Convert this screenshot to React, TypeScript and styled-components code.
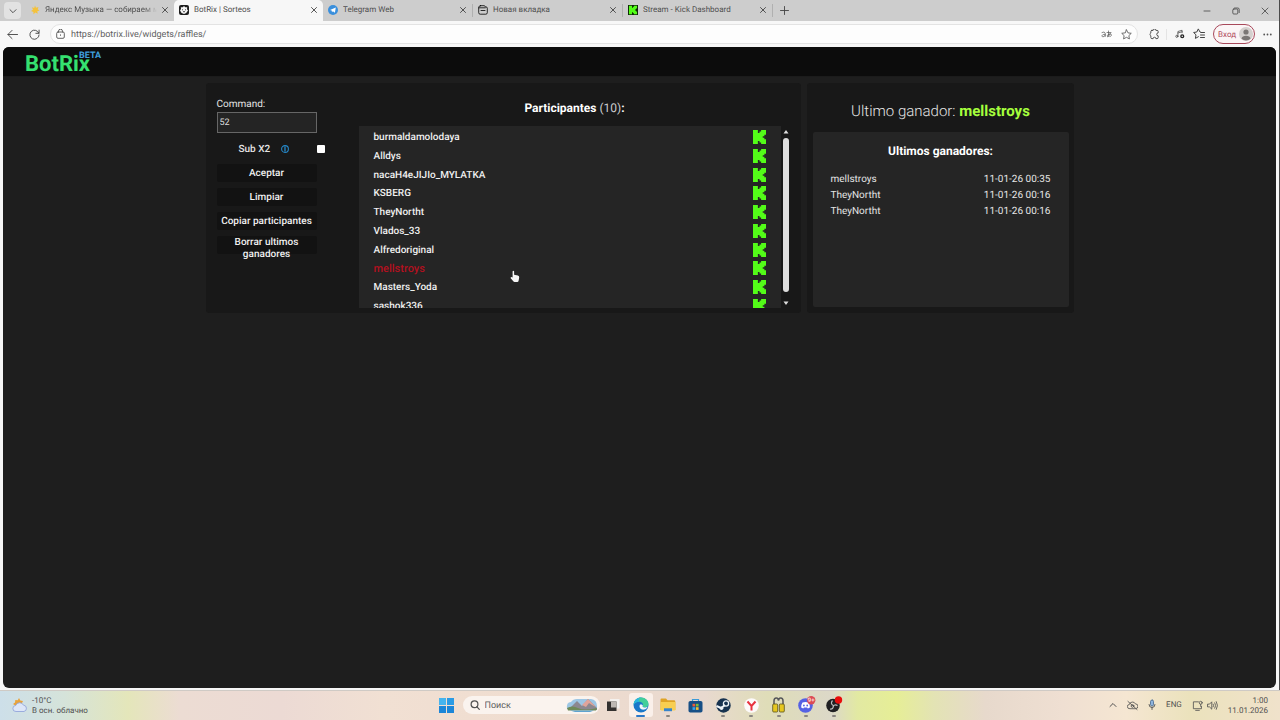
import React from "react";
import styled, { createGlobalStyle, css } from "styled-components";

const GlobalStyle = createGlobalStyle`
  * { box-sizing: border-box; }
  body { margin: 0; background: #f7f7f7; font-family: Roboto, "Liberation Sans", sans-serif; text-rendering: geometricPrecision; }
  button, input { font-family: inherit; text-rendering: inherit; }
  svg { display: block; flex: none; }
`;

const Desktop = styled.div`
  min-height: 100vh;
  display: flex;
  flex-direction: column;
`;

const BrowserWindow = styled.div`
  flex: 1;
  display: flex;
  flex-direction: column;
  background: #f7f7f7;
  border-right: 1px solid #4a4a4a;
`;

/* Tab strip */
const TabStrip = styled.div`
  height: 21px;
  display: flex;
  align-items: center;
  background: #cdcdcd;
`;

const PlainButton = styled.button`
  border: 0;
  padding: 0;
  background: none;
  color: #444;
  display: flex;
  align-items: center;
  justify-content: center;
`;

const TabMenu = styled(PlainButton)`
  width: 17px;
  height: 17px;
  margin: 0 4px;
  border-radius: 4px;
  background: #e2e2e2;
`;

const Tab = styled.div<{ $active?: boolean }>`
  flex: 0 1 149px;
  min-width: 0;
  height: 21px;
  padding: 0 6px 1px 5px;
  display: flex;
  align-items: center;
  gap: 5px;
  border-radius: 5px 5px 0 0;
  background: ${(p) => (p.$active ? "#f7f7f7" : "transparent")};
`;

const TabTitle = styled.span<{ $fade?: boolean }>`
  flex: 1;
  min-width: 0;
  overflow: hidden;
  white-space: nowrap;
  font-size: 8px;
  line-height: 12px;
  color: #505050;
  ${(p) => p.$fade && css`mask-image: linear-gradient(to right, #000 88%, transparent);`}
`;

const Separator = styled.span`
  width: 1px;
  height: 13px;
  background: #b0b0b0;
`;

const NewTab = styled(PlainButton)`
  width: 22px;
  height: 17px;
`;

const WindowControls = styled.div`
  margin-left: auto;
  padding-right: 10px;
  display: flex;
  gap: 21px;
`;

/* Address bar */
const Toolbar = styled.div`
  height: 26px;
  padding: 0 7px;
  display: flex;
  align-items: center;
  color: #555;
`;

const NavButtons = styled.div`
  width: 43px;
  display: flex;
  gap: 11px;
`;

const AddressBar = styled.form`
  flex: 1;
  height: 20px;
  margin: 0;
  padding: 0 5px;
  display: flex;
  align-items: center;
  gap: 6px;
  background: #fdfdfd;
  border: 1px solid #e3e3e3;
  border-radius: 10px;
`;

const AddressInput = styled.input`
  flex: 1;
  min-width: 0;
  border: 0;
  padding: 1px 0 0;
  background: none;
  outline: 0;
  font-size: 9px;
  line-height: 14px;
  color: #606060;
`;

const AddressActions = styled.div`
  display: flex;
  align-items: center;
  gap: 9px;
`;

const ToolbarActions = styled.div`
  display: flex;
  align-items: center;
  gap: 8px;
  padding-left: 11px;
`;

const ExtensionButton = styled(PlainButton)`
  width: 18px;
  justify-content: flex-start;
  border-right: 1px solid #e4e4e4;
`;

const LoginButton = styled.button`
  height: 20px;
  padding: 0 1px 0 4px;
  display: flex;
  align-items: center;
  gap: 3px;
  border: 1px solid #a8485a;
  border-radius: 10px;
  background: #fbf5f6;
  color: #b04a5c;
  font-size: 8px;
`;

/* Web page */
const Page = styled.div`
  flex: 1;
  margin: 0 3px 2px;
  border-radius: 6px;
  overflow: hidden;
  background: #1e1e1e;
  color: #e4e4e4;
`;

const Header = styled.header`
  height: 30px;
  padding: 0 22px;
  display: flex;
  align-items: flex-start;
  background: #0c0c0c;
  border-bottom: 1px solid #1b1b1b;
`;

const Brand = styled.a`
  position: relative;
  color: #35e070;
  text-decoration: none;
  font-size: 22px;
  line-height: 36px;
  font-weight: 700;
`;

const Beta = styled.span`
  position: absolute;
  left: 54px;
  top: 4px;
  font-size: 9px;
  line-height: 10px;
  font-weight: 700;
  color: #3f9fdc;
`;

const Main = styled.main`
  max-width: 868px;
  margin: 6px auto 0;
  display: grid;
  grid-template-columns: 595fr 267fr;
  gap: 6px;
`;

const Panel = styled.section`
  background: #181818;
  border-radius: 3px;
`;

const RafflePanel = styled(Panel)`
  padding: 15px 10px 5px 11px;
  display: grid;
  grid-template-columns: 108px 1fr;
  column-gap: 34px;
`;

const WinnerPanel = styled(Panel)`
  padding: 18px 5px 6px 6px;
  display: flex;
  flex-direction: column;
`;

const RaffleForm = styled.form`
  display: flex;
  flex-direction: column;
  align-items: flex-start;
`;

const FieldLabel = styled.label`
  font-size: 10px;
  line-height: 14px;
`;

const CommandInput = styled.input`
  width: 100px;
  height: 21px;
  padding: 1px 2px 0;
  border: 1px solid #666;
  background: #242424;
  color: #ddd;
  font-size: 9px;
  outline: 0;
`;

const SubRow = styled.div`
  width: 108px;
  height: 14px;
  margin: 9px 0 8px;
  padding-left: 22px;
  display: flex;
  align-items: center;
  gap: 11px;
  font-size: 10px;
  font-weight: 500;
`;

const Check = styled.input`
  appearance: none;
  width: 8px;
  height: 8px;
  margin: 0 0 0 auto;
  border-radius: 1px;
  background: #fff;
`;

const ActionButton = styled.button`
  width: 100px;
  height: 18px;
  margin-bottom: 6px;
  padding: 1px 0 0;
  border: 0;
  border-radius: 2px;
  background: #121212;
  color: #f0f0f0;
  font-size: 10px;
  line-height: 12px;
  font-weight: 500;
`;

const ListTitle = styled.h2`
  margin: 2px 0 10px;
  text-align: center;
  font-size: 12px;
  line-height: 16px;
  font-weight: 700;
  color: #fff;
`;

const Count = styled.span`
  font-weight: 400;
  color: #ccc;
`;

const ListFrame = styled.div`
  position: relative;
  height: 182px;
  display: flex;
`;

const ListViewport = styled.div`
  flex: 1;
  overflow: hidden;
  background: #252525;
`;

const ParticipantList = styled.ul`
  height: 187px;
  margin: 2px 0 0;
  padding: 0 15px;
  list-style: none;
  display: grid;
  grid-auto-rows: 1fr;
`;

const Participant = styled.li<{ $winner?: boolean }>`
  display: flex;
  align-items: center;
  justify-content: space-between;
  font-size: ${(p) => (p.$winner ? "11px" : "10px")};
  font-weight: 500;
  color: ${(p) => (p.$winner ? "#b3101f" : "#f0f0f0")};
`;

const ParticipantName = styled.span`
  padding-top: 1px;
`;

const Scrollbar = styled.div`
  width: 10px;
  padding: 4px 2px 3px;
  display: flex;
  flex-direction: column;
  align-items: center;
  gap: 4px;
`;

const Thumb = styled.div`
  flex: 1;
  width: 6px;
  margin-bottom: 5px;
  border-radius: 3px;
  background: #dedede;
`;

const Pointer = styled.svg`
  position: absolute;
  left: 151px;
  top: 144px;
`;

const LastWinner = styled.p`
  margin: 0 0 11px;
  text-align: center;
  font-size: 15px;
  line-height: 20px;
  font-weight: 300;
`;

const WinnerName = styled.strong`
  font-weight: 700;
  color: #a6ff3d;
`;

const History = styled.div`
  flex: 1;
  padding: 11px 18px;
  background: #252525;
  border-radius: 2px;
`;

const HistoryTitle = styled(ListTitle)`
  margin: 0 0 13px;
`;

const HistoryTable = styled.table`
  width: 100%;
  border-collapse: collapse;
  font-size: 10px;
  line-height: 16px;
  td { padding: 0; }
  td:last-child { text-align: right; }
`;

/* Taskbar */
const Taskbar = styled.footer`
  height: 30px;
  padding: 0 12px 1px;
  display: grid;
  grid-template-columns: 1fr auto 1fr;
  align-items: center;
  border-top: 1px solid #cfcac5;
  color: #505050;
  font-size: 8px;
  line-height: 10px;
  background: linear-gradient(to right, #cddfe9 0%, #d5e3da 5%, #e4e6ba 10%, #ecdcd3 14%, #ecdad4 22%, #f1e0d3 30%, #efdccf 44%, #e8d9cf 55%, #dfddb8 60%, #dcd8c8 65%, #e2e9a2 67%, #e6ee96 70%, #e3e3b4 73%, #e7d9cc 77%, #efdfd2 83%, #f5e6d2 88%, #ebe2bc 93%, #f0e2cb 100%);
`;

const Weather = styled.div`
  display: flex;
  align-items: center;
  gap: 4px;
`;

const Stack = styled.div<{ $right?: boolean }>`
  padding-top: 2px;
  display: flex;
  flex-direction: column;
  text-align: ${(p) => (p.$right ? "right" : "left")};
`;

const Dock = styled.nav`
  padding-left: 6px;
  display: flex;
  align-items: center;
`;

const SearchBox = styled.label`
  width: 137px;
  height: 18px;
  margin-left: 9px;
  padding: 0 2px 0 7px;
  display: flex;
  align-items: center;
  gap: 5px;
  border-radius: 9px;
  background: #faf3ee;
`;

const SearchInput = styled.input`
  flex: 1;
  min-width: 0;
  border: 0;
  padding: 1px 0 0;
  background: none;
  outline: 0;
  font-size: 9px;
  &::placeholder { color: #606060; opacity: 1; }
`;

const Apps = styled.div`
  width: 248px;
  display: grid;
  grid-auto-flow: column;
  grid-auto-columns: 1fr;
  justify-items: center;
`;

const AppButton = styled(PlainButton)<{ $open?: boolean; $active?: boolean }>`
  position: relative;
  width: 24px;
  height: 24px;
  border-radius: 3px;
  background: ${(p) => (p.$active ? "#faf0ea" : "transparent")};
  &::after {
    content: "";
    display: ${(p) => (p.$open || p.$active ? "block" : "none")};
    position: absolute;
    bottom: 0;
    width: ${(p) => (p.$active ? "9px" : "4px")};
    height: 2px;
    border-radius: 1px;
    background: ${(p) => (p.$active ? "#2b78c8" : "#8a8680")};
  }
`;

const Tray = styled.div`
  display: flex;
  align-items: center;
  justify-content: flex-end;
  gap: 10px;
`;

const TrayPair = styled.div`
  display: flex;
  gap: 4px;
`;

type LineProps = { w?: number; h?: number; box?: string; sw?: number; children: React.ReactNode };
const Line = ({ w = 12, h = w, box = "0 0 12 12", sw = 1, children }: LineProps) => (
  <svg width={w} height={h} viewBox={box} fill="none" stroke="currentColor" strokeWidth={sw} strokeLinecap="round" strokeLinejoin="round" aria-hidden="true">
    {children}
  </svg>
);

const Close = () => (
  <PlainButton aria-label="Закрыть">
    <Line w={6} box="0 0 6 6" sw={0.9}><path d="M.5.5l5 5M5.500.5l-5 5" /></Line>
  </PlainButton>
);

const KICK = "M0 0h3v2h1V1h1V0h3v3H7v1H6v1h1v1h1v3H5V8H4V7H3v2H0z";

const Kick = () => (
  <svg width="13" height="14" viewBox="0 0 8 9" preserveAspectRatio="none" fill="#53fc18" role="img" aria-label="Kick">
    <path d={KICK} />
  </svg>
);

const YandexMusicIcon = () => (
  <svg width="10" height="10" viewBox="0 0 10 10"><path d="M5 .5l1 2.300 2.500-.8-.8 2.300L9.500 5.500 7.300 6.300l.4 2.400-2.300-1.200-1.900 1.700L3.400 7 1 6l2-1.200L2 2.200l2.200.9z" fill="#f4c23c" /></svg>
);
const BotrixIcon = () => (
  <svg width="10" height="10" viewBox="0 0 10 10">
    <rect width="10" height="10" rx="2" fill="#1c1c1c" />
    <path d="M5 1l1.200 1.300h2L8 4.200 9 5.600 7.200 8 5 9 2.600 8 1 5.600l1-1.500L1.800 2.300h2z" fill="#f4f4f4" />
    <path d="M3 4.500l1 .6M7 4.500l-1 .6M4 6.700h2" stroke="#1c1c1c" strokeWidth=".8" />
  </svg>
);
const TelegramIcon = () => (
  <svg width="10" height="10" viewBox="0 0 10 10">
    <circle cx="5" cy="5" r="5" fill="#3a8fdc" />
    <path d="M2 4.900L7.800 2.500 6.900 7.700 4.900 6.300l-.9.900-.3-1.700z" fill="#fff" />
  </svg>
);
const PageIcon = () => (
  <Line w={10} box="0 0 10 10" sw={0.8}><path d="M2.500.7h4l.8 1.200h.7a1.300 1.300 0 011.300 1.300v4.500A1.500 1.500 0 017.800 9.200H2.200A1.500 1.500 0 01.7 7.700V2.500A1.800 1.800 0 012.500.7zM.8 2.800h6.500M3 5.500h4" /></Line>
);
const KickTabIcon = () => (
  <svg width="10" height="10" viewBox="0 0 10 10"><rect width="10" height="10" fill="#102c08" /><path d={KICK} transform="translate(1 .8) scale(1 .93)" fill="#53fc18" /></svg>
);

const participants = [
  "burmaldamolodaya", "Alldys", "nacaH4eJIJIo_MYLATKA", "KSBERG", "TheyNortht",
  "Vlados_33", "Alfredoriginal", "mellstroys", "Masters_Yoda", "sashok336",
];
const winners = [
  ["mellstroys", "11-01-26 00:35"],
  ["TheyNortht", "11-01-26 00:16"],
  ["TheyNortht", "11-01-26 00:16"],
];
const tabs = [
  { title: "Яндекс Музыка — собираем музыку", icon: <YandexMusicIcon />, fade: true },
  { title: "BotRix | Sorteos", icon: <BotrixIcon />, active: true },
  { title: "Telegram Web", icon: <TelegramIcon /> },
  { title: "Новая вкладка", icon: <PageIcon />, line: true },
  { title: "Stream - Kick Dashboard", icon: <KickTabIcon />, line: true },
];

const Browser = () => (
  <>
    <TabStrip>
      <TabMenu aria-label="Вкладки"><Line w={8} box="0 0 8 8" sw={0.9}><path d="M1 2.700l3 3 3-3" /></Line></TabMenu>
      {tabs.map((t) => (
        <React.Fragment key={t.title}>
          {t.line && <Separator />}
          <Tab $active={t.active}>
            {t.icon}
            <TabTitle $fade={t.fade}>{t.title}</TabTitle>
            <Close />
          </Tab>
        </React.Fragment>
      ))}
      <Separator />
      <NewTab aria-label="Новая вкладка"><Line w={9} box="0 0 9 9" sw={0.9}><path d="M4.500.5v8M.5 4.500h8" /></Line></NewTab>
      <WindowControls>
        <PlainButton aria-label="Свернуть"><Line w={8} box="0 0 8 8" sw={0.8}><path d="M1 4h6" /></Line></PlainButton>
        <PlainButton aria-label="Развернуть"><Line w={8} box="0 0 8 8" sw={0.8}><rect x=".8" y="2" width="5" height="5" rx="1" /><path d="M2.500 1h3.300A1.400 1.400 0 017.200 2.400v3.200" /></Line></PlainButton>
        <PlainButton aria-label="Закрыть окно"><Line w={8} box="0 0 8 8" sw={0.8}><path d="M1 1l6 6M7 1L1 7" /></Line></PlainButton>
      </WindowControls>
    </TabStrip>
    <Toolbar>
      <NavButtons>
        <PlainButton aria-label="Назад"><Line w={11} box="0 0 12 12"><path d="M11.500 6H1M5.500 1.500L1 6l4.500 4.500" /></Line></PlainButton>
        <PlainButton aria-label="Обновить"><Line w={11} box="0 0 12 12"><path d="M10.700 4.500A5 5 0 1011 6.500M11 1.200v3.500H7.500" /></Line></PlainButton>
      </NavButtons>
      <AddressBar>
        <Line w={9} h={10} box="0 0 9 10" sw={0.9}><rect x=".7" y="3" width="7.600" height="6.300" rx="1.300" /><path d="M2.500 3V2.200a2 2 0 014 0V3M4.500 5.800v.6" /></Line>
        <AddressInput aria-label="Адрес" defaultValue="https://botrix.live/widgets/raffles/" />
        <AddressActions>
          <Line w={11} h={8} box="0 0 11 8" sw={0.7}><path d="M1 2.500q2.800-1.500 3.200.7v3.300M4.200 4.300C.5 4 .2 6.800 2 6.800q1.500 0 2.200-1.500M6 2.500h4M7.500 1v4.500q0 1.500-1 1-1.200-1.200 1.500-2.300c2-.7 2.700.3 2.300 1.400q-.4.900-1.500 1M9.300 3.500Q8.500 6 7 6.700" /></Line>
          <Line w={11} sw={0.9}><path d="M6 .9l1.600 3.300 3.600.5-2.600 2.500.6 3.600L6 9.100l-3.200 1.700.6-3.600L.8 4.700l3.600-.5z" /></Line>
        </AddressActions>
      </AddressBar>
      <ToolbarActions>
        <ExtensionButton aria-label="Расширения"><Line w={11}><path d="M3.200 1.500h1.300a1.500 1.500 0 013 0h1.300a1.200 1.200 0 011.200 1.200v1.500a1.600 1.600 0 100 3.200v1.900a1.200 1.200 0 01-1.200 1.200H7.500a1.500 1.500 0 00-3 0H3.200A1.200 1.200 0 012 9.300V7.400a1.700 1.700 0 010-3V2.700a1.200 1.200 0 011.200-1.200z" /></Line></ExtensionButton>
        <PlainButton aria-label="Музыка">
          <Line w={10} sw={0.9}><path d="M3.500 8.500V3L8.500 1.500v3M3.500 4.800l5-1.500" /><circle cx="2.200" cy="8.800" r="1.300" /><circle cx="8.700" cy="8.700" r="1.700" stroke="#222" strokeWidth="1.600" /></Line>
        </PlainButton>
        <PlainButton aria-label="Избранное"><Line w={12}><path d="M7.500 4.200L7 4 5.300.9 3.800 4l-3.200.5L3 6.800l-.6 3.600 3-1.700M8 4.500h3.500M7.500 7h4M7.500 9.500h4" /></Line></PlainButton>
        <LoginButton>
          Вход
          <svg width="14" height="14" viewBox="0 0 14 14"><circle cx="7" cy="7" r="7" fill="#d4d0ce" /><circle cx="7" cy="5" r="2.600" fill="#7b7775" /><path d="M2.500 11.800c0-4 9-4 9 0a6.500 6.500 0 01-9 0z" fill="#7b7775" /></svg>
        </LoginButton>
        <PlainButton aria-label="Меню"><svg width="9" height="3" viewBox="0 0 9 3" fill="#555"><circle cx="1.200" cy="1.500" r=".9" /><circle cx="4.500" cy="1.500" r=".9" /><circle cx="7.800" cy="1.500" r=".9" /></svg></PlainButton>
      </ToolbarActions>
    </Toolbar>
  </>
);

const Raffle = () => (
  <RafflePanel>
    <RaffleForm onSubmit={(e) => e.preventDefault()}>
      <FieldLabel htmlFor="command">Command:</FieldLabel>
      <CommandInput id="command" defaultValue="52" />
      <SubRow>
        <label htmlFor="subx2">Sub X2</label>
        <svg width="8" height="8" viewBox="0 0 8 8" fill="none" stroke="#2588c9"><circle cx="4" cy="4" r="3.400" strokeWidth="1.100" /><path d="M4 1.500v5" strokeWidth="1.300" /></svg>
        <Check id="subx2" type="checkbox" />
      </SubRow>
      <ActionButton type="submit">Aceptar</ActionButton>
      <ActionButton type="button">Limpiar</ActionButton>
      <ActionButton type="button">Copiar participantes</ActionButton>
      <ActionButton type="button">Borrar ultimos ganadores</ActionButton>
    </RaffleForm>
    <div>
      <ListTitle>Participantes <Count>(10)</Count>:</ListTitle>
      <ListFrame>
        <ListViewport>
          <ParticipantList>
            {participants.map((name) => (
              <Participant key={name} $winner={name === "mellstroys"}>
                <ParticipantName>{name}</ParticipantName>
                <Kick />
              </Participant>
            ))}
          </ParticipantList>
        </ListViewport>
        <Scrollbar>
          <svg width="6" height="4" viewBox="0 0 6 4" fill="#dedede"><path d="M3 0l2.500 3.500h-5z" /></svg>
          <Thumb />
          <svg width="6" height="4" viewBox="0 0 6 4" fill="#dedede"><path d="M3 4L.5.500h5z" /></svg>
        </Scrollbar>
        <Pointer width="10" height="13" viewBox="0 0 10 13" aria-hidden="true">
          <path d="M2.600 1.200q.9-.8 1.500.1v3.500l3.800.8q1.500.4 1.300 1.900l-.6 3.200q-.2 1.300-1.400 1.300H4.500q-.7 0-1.200-.7L.7 8.200Q.2 7.200 1.400 7l1.200.6z" fill="#f6f6f6" />
        </Pointer>
      </ListFrame>
    </div>
  </RafflePanel>
);

const Winners = () => (
  <WinnerPanel>
    <LastWinner>Ultimo ganador: <WinnerName>mellstroys</WinnerName></LastWinner>
    <History>
      <HistoryTitle>Ultimos ganadores:</HistoryTitle>
      <HistoryTable>
        <tbody>
          {winners.map(([name, date], i) => (
            <tr key={i}><td>{name}</td><td>{date}</td></tr>
          ))}
        </tbody>
      </HistoryTable>
    </History>
  </WinnerPanel>
);

const EdgeIcon = () => (
  <svg width="16" height="16" viewBox="0 0 16 16">
    <circle cx="8" cy="8" r="7.500" fill="#1b78c9" />
    <path d="M.6 7.500C1 3 4.500.5 8 .5c4.500 0 7.500 3.200 7.500 6.300 0 2.500-2 3.700-4 3.700-1.500 0-2.300-.7-1.800-1.400C10.800 7 9 4.800 6.300 4.800 3.500 4.800 1.500 6 .6 7.500z" fill="#43cf9a" />
    <path d="M.6 7.500C1 3 4.500.5 8 .5c-2 1-3 2.500-1.700 4.300C3.500 4.800 1.500 6 .6 7.500z" fill="#2bb5e0" />
    <path d="M9.700 9.100c-.5.700.3 1.400 1.800 1.400 1.200 0 2.400-.3 3.200-1.100-.5 1.700-1.800 2.900-3.300 3.200C7.800 13.300 5.500 10.500 7 7.500c1.600-.3 3.300.2 2.700 1.600z" fill="#f3f7fa" />
  </svg>
);

const TaskbarView = () => (
  <Taskbar>
    <Weather>
      <svg width="16" height="16" viewBox="0 0 16 16">
        <path d="M7 1l1.300 2.500L11 4l-1.500 3L4 9 1 7l2-1.500L3.300 3l2.500.3z" fill="#e9a33b" />
        <path d="M4 14.500a3 3 0 01-.3-6 4.200 4.200 0 017.800-.3A3.200 3.200 0 0112 14.500z" fill="#dde6f8" stroke="#93a6da" strokeWidth=".9" />
      </svg>
      <Stack><span>-10°C</span><span>В осн. облачно</span></Stack>
    </Weather>
    <Dock>
      <PlainButton aria-label="Пуск">
        <svg width="15" height="15" viewBox="0 0 15 15" fill="#1c86d8"><path d="M0 0h7v7H0z" fill="#46b4ee" /><path d="M8 0h7v7H8z" fill="#2b9be4" /><path d="M0 8h7v7H0zM8 8h7v7H8z" /></svg>
      </PlainButton>
      <SearchBox>
        <Line w={10} box="0 0 10 10" sw={1.2}><circle cx="4.500" cy="4.200" r="3.400" /><path d="M7 6.800l2.300 2.500" /></Line>
        <SearchInput placeholder="Поиск" aria-label="Поиск" />
        <svg width="32" height="16" viewBox="0 0 32 16">
          <path d="M1 12Q0 5 5 5q2-3 6-3h14q6 1 6 7v4z" fill="#9dc6e4" />
          <path d="M3 12l8-8 5 5 6-7 9 9v2H3z" fill="#8c8890" />
          <path d="M16 8l6-6 8 8-4-2-3-2-3 4z" fill="#e0a49a" />
          <path d="M1 11q5-3 11 0t19 0l-1 2.500H2z" fill="#6f8a58" />
          <path d="M4 13.500h24l-4 1.500H9z" fill="#5fa3d0" />
        </svg>
      </SearchBox>
      <Apps>
        <AppButton aria-label="Представление задач"><svg width="14" height="14" viewBox="0 0 14 14"><path d="M4 1h9.500v9.500H4z" fill="#f4f1ee" /><path d="M1 3.500h9.500V13H1z" fill="#33312f" /><path d="M5 3.500h5.500v6H5z" fill="#bdb8b3" /></svg></AppButton>
        <AppButton $active aria-label="Edge"><EdgeIcon /></AppButton>
        <AppButton $open aria-label="Проводник"><svg width="16" height="14" viewBox="0 0 16 14"><path d="M.5 1.500q0-1 1-1H6l1.500 1.800H14q1.300 0 1.300 1.200V12H.5z" fill="#dfa325" /><path d="M.5 4h15v7.500q0 1-1 1h-13q-1 0-1-1z" fill="#f8ce50" /><path d="M4 10.300h8v2.900H4z" fill="#3784cc" /></svg></AppButton>
        <AppButton aria-label="Microsoft Store"><svg width="15" height="15" viewBox="0 0 15 15"><path d="M4.500 4V1.500h6V4" fill="none" stroke="#3d9bd8" strokeWidth="1.200" /><rect x=".5" y="3" width="14" height="11.500" rx="1.800" fill="#174f86" /><path d="M4.500 5.800h2.700v2.700H4.500z" fill="#ee5a3a" /><path d="M7.900 5.800h2.700v2.700H7.900z" fill="#7fba3a" /><path d="M4.500 9.200h2.700v2.700H4.500z" fill="#35a5ea" /><path d="M7.900 9.200h2.700v2.700H7.900z" fill="#f8bd32" /></svg></AppButton>
        <AppButton $open aria-label="Steam"><svg width="15" height="15" viewBox="0 0 15 15"><circle cx="7.500" cy="7.500" r="7.200" fill="#17324f" /><path d="M.4 8l4.800 2L9 7" stroke="#eef3f7" strokeWidth="2" fill="none" /><circle cx="10" cy="5.500" r="2.600" fill="none" stroke="#eef3f7" strokeWidth="1.300" /><circle cx="5.500" cy="10.300" r="1.800" fill="#eef3f7" /></svg></AppButton>
        <AppButton $open aria-label="Яндекс"><svg width="15" height="15" viewBox="0 0 15 15"><circle cx="7.500" cy="7.500" r="7.300" fill="#fdfafa" /><path d="M3.500 3.500l4 4.500 4-4.500M7.500 7.500v5" fill="none" stroke="#e8323f" strokeWidth="2" /></svg></AppButton>
        <AppButton $open aria-label="Замки"><svg width="13" height="16" viewBox="0 0 13 16"><path d="M2 8V4q0-3 2.300-3T6 3.500M11 8V4q0-3-2.300-3T7 3.500" fill="none" stroke="#55565a" strokeWidth="1.500" /><rect x=".7" y="7" width="5" height="8" rx="1" fill="#e6c71f" stroke="#57501c" strokeWidth=".8" /><rect x="7.300" y="7" width="5" height="8" rx="1" fill="#e6c71f" stroke="#57501c" strokeWidth=".8" /></svg></AppButton>
        <AppButton $open aria-label="Discord">
          <svg width="20" height="18" viewBox="0 0 20 18"><circle cx="9.500" cy="9.500" r="7.300" fill="#5561e4" /><path d="M6.500 6.500q3-1.200 6 0 1.700 2.500 1.400 5l-2 1-.8-1H8l-.8 1-2-1q-.3-2.500 1.300-5z" fill="#fff" /><circle cx="7.900" cy="9.500" r=".9" fill="#5561e4" /><circle cx="11.200" cy="9.500" r=".9" fill="#5561e4" /><circle cx="15.200" cy="4.300" r="4.200" fill="#dc4b55" /><text x="15.200" y="6.300" textAnchor="middle" fontSize="6" fill="#fff" fontFamily="Roboto, sans-serif">9+</text></svg>
        </AppButton>
        <AppButton $open aria-label="OBS"><svg width="18" height="18" viewBox="0 0 18 18"><circle cx="8" cy="9.500" r="6.800" fill="#202022" /><path d="M7.500 4.500q-2.500 3 .8 5M12.500 9.500q-3.300-1.500-4.200 1M5 13q3.500.5 3.300-3.500" fill="none" stroke="#bdbdc0" strokeWidth="1.200" /><circle cx="13.500" cy="4" r="3.700" fill="#e80c0c" /></svg></AppButton>
      </Apps>
    </Dock>
    <Tray>
      <Line w={8} box="0 0 8 8"><path d="M1 5.500l3-3 3 3" /></Line>
      <Line w={11} sw={0.9}><path d="M2.800 9.500a2.300 2.300 0 01-.2-4.600 3.500 3.500 0 016.600-.6 2.600 2.600 0 01.3 5.200zM1 1.500l10 9" /><circle cx="6" cy="6.500" r="1.500" /></Line>
      <Line w={8} h={12} box="0 0 8 12" sw={0.9}><rect x="2.500" y="1" width="3" height="6" rx="1.500" fill="#8eb4dc" stroke="#4f7196" /><path d="M1 5.500a3 3 0 006 0M4 8.500v2" /></Line>
      <span>ENG</span>
      <TrayPair>
        <Line w={11} sw={0.9}><path d="M7 2H1.500v7.500h8.800V7M4 11.300h4" /><circle cx="9.500" cy="3" r="1.600" /><path d="M9.500 4.800V7" /></Line>
        <Line w={11} sw={0.9}><path d="M1 4.500h1.700L5.200 2v8L2.700 7.500H1zM6.800 4.500q1 1.500 0 3M8.500 3q2 3 0 6M10.200 1.800q2.600 4.200 0 8.400" /></Line>
      </TrayPair>
      <Stack $right><span>1:00</span><span>11.01.2026</span></Stack>
    </Tray>
  </Taskbar>
);

export default function App() {
  return (
    <>
      <GlobalStyle />
      <Desktop>
        <BrowserWindow>
          <Browser />
          <Page>
            <Header><Brand href="#">BotRix<Beta>BETA</Beta></Brand></Header>
            <Main>
              <Raffle />
              <Winners />
            </Main>
          </Page>
        </BrowserWindow>
        <TaskbarView />
      </Desktop>
    </>
  );
}
